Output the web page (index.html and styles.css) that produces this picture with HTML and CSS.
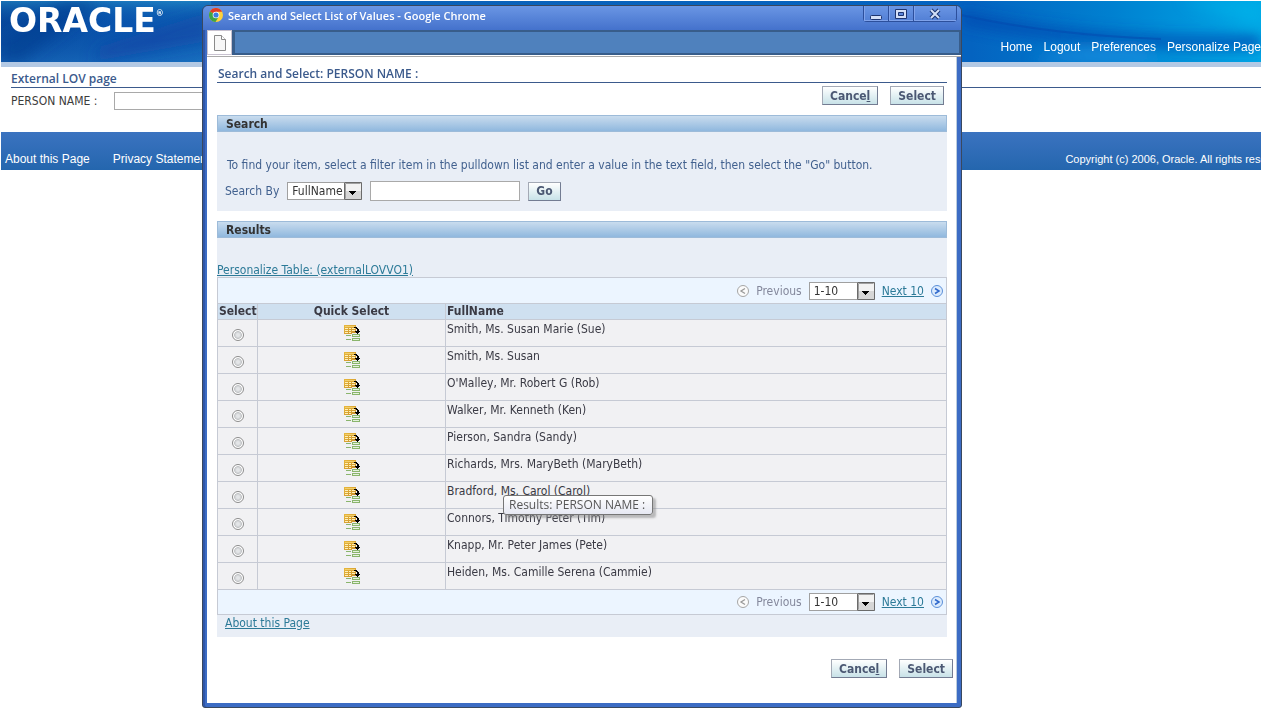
FILE: index.html
```html
<!DOCTYPE html>
<html lang="en">
<head>
<meta charset="utf-8">
<title>External LOV page</title>
<link rel="stylesheet" href="styles.css">
</head>
<body>
<svg class="defs" aria-hidden="true">
  <defs>
    <linearGradient id="gold" x2="1" y2="1"><stop offset="0" stop-color="#e9b93c"/><stop offset="1" stop-color="#c98f2a"/></linearGradient>
    <symbol id="quick" viewBox="0 0 16 16">
      <path fill="url(#gold)" d="M0 0h12v9H0z"/>
      <path fill="#f2cf6c" d="M1 1h10v1H1z"/>
      <path fill="#fff0b8" d="M1 3h3v1H1zM5 3h2v1H5zM8 3h3v1H8zM1 5h3v1H1zM5 5h2v1H5zM8 5h3v1H8zM1 7h3v1H1zM5 7h2v1H5z"/>
      <path fill="#f0f0f2" d="M8 8h5v1H8z"/>
      <path fill="#000" d="M10 2h3v1h1v1h1v2h1v1h-1v1h-1v1h-1V8h-1V7h-1V6h2V4h-1V3h-2z"/>
      <path fill="#8ab56c" d="M2 10h5v1H2zM2 14h5v1H2zM8 9h8v3H8zM8 13h8v3H8z"/>
      <path fill="#e4f2dc" d="M9 10h6v1H9zM9 14h6v1H9z"/>
    </symbol>
    <symbol id="prev" viewBox="0 0 12 12">
      <circle cx="6" cy="6" r="5.500" fill="#fbfbfb" stroke="#a5a5a5"/>
      <path fill="none" stroke="#999" stroke-width="1.300" d="M8 3.500 4 6l4 2.500"/>
    </symbol>
    <symbol id="next" viewBox="0 0 12 12">
      <circle cx="6" cy="6" r="5.500" fill="#dcebfc" stroke="#5b8fd8"/>
      <path fill="none" stroke="#2f68cc" stroke-width="1.500" d="M4 3.500 8 6 4 8.500"/>
    </symbol>
    <symbol id="drop" viewBox="0 0 18 18">
      <path fill="#f2f2f2" d="M0 0h18v9H0z"/><path fill="#d6d6d6" d="M0 9h18v9H0z"/>
      <path fill="none" stroke="#6b6b6b" d="M.5.5h17v17H.5z"/>
      <path fill="none" stroke="#a0a0a0" d="M1.500 16.500v-15h15"/>
      <path d="M5 9h7v1h-1v1h-1v1H9v1H8v-1H7v-1H6v-1H5z"/>
    </symbol>
  </defs>
</svg>

<div class="page">
  <header class="banner">
    <svg class="banner-art" viewBox="0 0 1260 61" preserveAspectRatio="none" aria-hidden="true">
      <defs>
        <linearGradient id="sky"><stop offset="0" stop-color="#07489c"/><stop offset=".1" stop-color="#0a55ae"/><stop offset=".16" stop-color="#0f62b6"/><stop offset=".77" stop-color="#0463c0"/><stop offset=".88" stop-color="#0080d0"/><stop offset="1" stop-color="#00a8e6"/></linearGradient>
        <linearGradient id="shade" x2="0" y2="1"><stop offset="0" stop-color="#2a9acc" stop-opacity=".5"/><stop offset=".35" stop-color="#0a55ae" stop-opacity="0"/><stop offset="1" stop-color="#2a86d0" stop-opacity=".35"/></linearGradient>
        <filter id="soft" x="-20%" y="-50%" width="140%" height="200%"><feGaussianBlur stdDeviation="7"/></filter>
      </defs>
      <path fill="url(#sky)" d="M0 0h1260v61H0z"/>
      <path fill="url(#shade)" d="M0 0h210v61H0z"/>
      <g filter="url(#soft)">
        <path fill="#053c90" opacity=".6" d="M0 40 60 0h40L20 61H0z"/>
        <path fill="#0d3ea0" opacity=".5" d="M100 45 210 10v30L90 61z"/>
        <path fill="#003ca8" opacity=".7" d="M960 12q130 28 300 22v14q-170 2-300-26z"/>
        <path fill="#2a93e6" opacity=".6" d="M1030 61q40-18 110-14l20 14z"/>
        <path fill="#00b4ea" opacity=".6" d="M1180 0h80v25z"/>
      </g>
      <path fill="none" stroke="#0347ae" stroke-opacity=".5" stroke-width="2" d="M960 14q90 20 200 24"/>
    </svg>
    <div class="logo">ORACLE<sup>®</sup></div>
    <nav class="banner-links">
      <a href="#">Home</a><a href="#">Logout</a><a href="#">Preferences</a><a href="#">Personalize Page</a>
    </nav>
  </header>
  <main class="form">
    <h1 class="title">External LOV page</h1>
    <div class="field">
      <label for="person">PERSON NAME :</label>
      <input id="person" class="text" type="text">
    </div>
  </main>
  <footer class="footer">
    <nav class="footer-links"><a href="#">About this Page</a><a href="#">Privacy Statement</a></nav>
    <small>Copyright (c) 2006, Oracle. All rights reserved.</small>
  </footer>
</div>

<section class="window" aria-label="Search and Select List of Values">
  <div class="titlebar">
    <svg class="chrome" viewBox="0 0 14 14" aria-hidden="true">
      <circle cx="7" cy="7" r="7" fill="#ffd23c"/>
      <path fill="#e03c28" d="M7 7 .9 3.500A7 7 0 0 1 13.100 3.700L7 3.800z"/>
      <path fill="#3fa447" d="M.9 3.500A7 7 0 0 0 6.500 14L9.500 9 7 7z"/>
      <circle cx="7" cy="7" r="3.300" fill="#fff"/><circle cx="7" cy="7" r="2.600" fill="#3b7de0"/>
    </svg>
    <span class="caption">Search and Select List of Values - Google Chrome</span>
    <div class="controls">
      <button type="button" aria-label="Minimize"><svg viewBox="0 0 14 12"><rect x="1.500" y="7.500" width="11" height="4" rx="1" fill="#d4e0f8" stroke="#1d3570"/></svg></button>
      <button type="button" aria-label="Maximize"><svg viewBox="0 0 14 12"><path fill="#d4e0f8" stroke="#1d3570" d="M1.500 1.500h11v9h-11z"/><path fill="#5b86dc" stroke="#1d3570" d="M4.500 4.500h5v3h-5z"/></svg></button>
      <button type="button" class="close" aria-label="Close"><svg viewBox="0 0 14 12"><path fill="none" stroke="#1d3570" stroke-width="4" d="m3 2 8 8M11 2l-8 8"/><path fill="none" stroke="#d4e0f8" stroke-width="2" d="m3 2 8 8M11 2l-8 8"/></svg></button>
    </div>
  </div>
  <div class="address">
    <span class="doc"><svg viewBox="0 0 12 16" aria-hidden="true"><path fill="#f7f7f7" stroke="#8a8a8a" d="M.5.5h7l4 4v11H.5z"/><path fill="#fff" stroke="#8a8a8a" d="M7.500.5v4h4"/></svg></span>
    <span class="url"></span>
  </div>
  <div class="content">
    <h2 class="title">Search and Select: PERSON NAME :</h2>
    <div class="actions top"><button type="button" class="btn">Cance<u>l</u></button><button type="button" class="btn">Select</button></div>

    <section class="panel search">
      <h3>Search</h3>
      <p>To find your item, select a filter item in the pulldown list and enter a value in the text field, then select the "Go" button.</p>
      <div class="query">
        <label for="by">Search By</label>
        <span class="pick by"><select id="by"><option>FullName</option></select><svg><use href="#drop"/></svg></span>
        <input class="text" type="text" aria-label="Search value">
        <button type="button" class="btn">Go</button>
      </div>
    </section>

    <section class="panel results">
      <h3>Results</h3>
      <a class="personalize" href="#">Personalize Table: (externalLOVVO1)</a>
      <div class="pager">
        <svg class="arrow"><use href="#prev"/></svg><span>Previous</span>
        <span class="pick range"><select aria-label="Rows shown"><option>1-10</option></select><svg><use href="#drop"/></svg></span>
        <a href="#">Next 10</a><svg class="arrow"><use href="#next"/></svg>
      </div>
      <table>
        <thead><tr><th class="c1">Select</th><th class="c2">Quick Select</th><th>FullName</th></tr></thead>
        <tbody>
          <tr><td><input type="radio" name="r" aria-label="Smith, Ms. Susan Marie (Sue)"></td><td><svg class="quick"><use href="#quick"/></svg></td><td>Smith, Ms. Susan Marie (Sue)</td></tr>
          <tr><td><input type="radio" name="r" aria-label="Smith, Ms. Susan"></td><td><svg class="quick"><use href="#quick"/></svg></td><td>Smith, Ms. Susan</td></tr>
          <tr><td><input type="radio" name="r" aria-label="O'Malley, Mr. Robert G (Rob)"></td><td><svg class="quick"><use href="#quick"/></svg></td><td>O'Malley, Mr. Robert G (Rob)</td></tr>
          <tr><td><input type="radio" name="r" aria-label="Walker, Mr. Kenneth (Ken)"></td><td><svg class="quick"><use href="#quick"/></svg></td><td>Walker, Mr. Kenneth (Ken)</td></tr>
          <tr><td><input type="radio" name="r" aria-label="Pierson, Sandra (Sandy)"></td><td><svg class="quick"><use href="#quick"/></svg></td><td>Pierson, Sandra (Sandy)</td></tr>
          <tr><td><input type="radio" name="r" aria-label="Richards, Mrs. MaryBeth (MaryBeth)"></td><td><svg class="quick"><use href="#quick"/></svg></td><td>Richards, Mrs. MaryBeth (MaryBeth)</td></tr>
          <tr><td><input type="radio" name="r" aria-label="Bradford, Ms. Carol (Carol)"></td><td><svg class="quick"><use href="#quick"/></svg></td><td class="tipped">Bradford, Ms. Carol (Carol)<span class="tip" role="tooltip">Results: PERSON NAME :</span></td></tr>
          <tr><td><input type="radio" name="r" aria-label="Connors, Timothy Peter (Tim)"></td><td><svg class="quick"><use href="#quick"/></svg></td><td>Connors, Timothy Peter (Tim)</td></tr>
          <tr><td><input type="radio" name="r" aria-label="Knapp, Mr. Peter James (Pete)"></td><td><svg class="quick"><use href="#quick"/></svg></td><td>Knapp, Mr. Peter James (Pete)</td></tr>
          <tr><td><input type="radio" name="r" aria-label="Heiden, Ms. Camille Serena (Cammie)"></td><td><svg class="quick"><use href="#quick"/></svg></td><td>Heiden, Ms. Camille Serena (Cammie)</td></tr>
        </tbody>
      </table>
      <div class="pager last">
        <svg class="arrow"><use href="#prev"/></svg><span>Previous</span>
        <span class="pick range"><select aria-label="Rows shown"><option>1-10</option></select><svg><use href="#drop"/></svg></span>
        <a href="#">Next 10</a><svg class="arrow"><use href="#next"/></svg>
      </div>
      <a class="about" href="#">About this Page</a>
    </section>
    <div class="actions bottom"><button type="button" class="btn">Cance<u>l</u></button><button type="button" class="btn">Select</button></div>
  </div>
</section>
</body>
</html>
```
FILE: styles.css
```css
* { box-sizing: border-box; }
body { margin: 0; background: #fff; font: 12px/16px "DejaVu Sans Condensed", "DejaVu Sans", sans-serif; color: #3c3c3c; overflow: hidden; }
h1, h2, h3, p { margin: 0; }
button, input, select { font: inherit; margin: 0; }
svg { display: block; }
.defs { position: absolute; width: 0; height: 0; }

.page { padding: 1px 1px 0; }
.banner { position: relative; height: 66px; border-bottom: 5px solid #b3c9e4; display: flex; justify-content: space-between; overflow: hidden; }
.banner-art { position: absolute; inset: 0; width: 100%; height: 100%; }
.logo { position: relative; padding: 4px 0 0 8px; font: bold 33px/32px "DejaVu Sans", sans-serif; color: #fff; }
.logo sup { font-size: 8px; line-height: 8px; vertical-align: 16px; }
.banner-links { position: relative; display: flex; gap: 11px; margin-top: 38px; font: 12px/16px "Liberation Sans", sans-serif; white-space: nowrap; margin-right: 0; }
.banner-links a, .footer a { color: #fff; text-decoration: none; }
.title { font: 600 12px/16px "Open Sans", "Noto Sans", sans-serif; color: #3b5a8c; border-bottom: 1px solid #3b5a8c; }
.form { padding: 3px 0 0 10px; height: 65px; }
.form .title { line-height: 17px; }
.field { display: flex; align-items: center; gap: 17px; margin-top: 4px; }
.text { height: 18px; width: 150px; border: 1px solid #a9a9a9; background: #fff; padding: 0 3px; }
.footer { height: 38px; background: linear-gradient(#3b73c0, #2466ae); color: #fff; display: flex; justify-content: space-between; padding: 19px 0 0 4px; font: 12px/16px "Liberation Sans", sans-serif; overflow: hidden; white-space: nowrap; }
.footer-links { display: flex; gap: 23px; }
.footer small { font-size: 11px; margin-right: -30px; }

.window { position: absolute; left: 202px; right: 300px; top: 5px; border: 1px solid #39485f; border-radius: 6px 6px 3px 3px; background: #3c6cc4; padding: 0 4px 4px; box-shadow: inset 2px 0 #2f56a8; }
.titlebar { height: 24px; margin: 0 -4px; padding: 0 4px 0 6px; border-radius: 5px 5px 0 0; background: linear-gradient(#6a96e4, #4472cc); display: flex; gap: 5px; color: #fff; }
.chrome { width: 14px; height: 14px; margin-top: 2px; }
.caption { flex: 1; font: 600 11px/19px "Open Sans", "Noto Sans", sans-serif; white-space: nowrap; }
.controls { display: flex; height: 16px; border: 1px solid #2c4f9c; border-top: 0; border-radius: 0 0 4px 4px; }
.controls button { width: 25px; padding: 0 5px; border: 0; border-right: 1px solid #2c4f9c; background: none; box-shadow: inset 1px -1px #7fa2ea; }
.controls .close { width: 42px; padding: 0 14px; border: 0; }
.controls svg { width: 14px; height: 12px; }
.address { display: flex; height: 27px; background: #fff; border-bottom: 1px solid #aaa; margin-right: -4px; }
.doc { width: 25px; padding: 4px 6px; border: 1px solid #c8c2d0; height: 25px; }
.doc svg { width: 12px; height: 16px; }
.url { flex: 1; height: 25px; border: 2px solid #385d8a; border-left-width: 3px; background: #4f81bd; }
.content { background: #fff; padding: 9px 9px 25px 10px; border-right: 1px solid #bcd; color: #42618f; }
.content .title { padding-left: 1px; }
.actions { display: flex; justify-content: flex-end; gap: 12px; }
.actions.top { padding: 3px 3px 10px 0; }
.actions.bottom { margin: 22px -6px 0 0; }
.btn { height: 19px; padding: 0 7px; border: 1px solid; border-color: #a3a9b5 #737c92 #737c92 #a3a9b5; background: linear-gradient(#fff, #c8e2e8); color: #4b5873; font-weight: bold; line-height: 16px; }
.panel { background: #e9eef6; }
.panel h3 { height: 17px; border: 1px solid #9dbbd9; background: linear-gradient(#c9dcee, #90b8de); padding-left: 8px; font-size: 12px; line-height: 17px; color: #333; }
.panel p { padding: 25px 10px 0; }
.search { height: 96px; margin-bottom: 10px; }
.query { display: flex; align-items: center; gap: 8px; padding: 8px 8px 0; }
.query .text { height: 20px; }
.pick { position: relative; display: block; }
.pick select { appearance: none; display: block; width: 100%; height: 18px; border: 1px solid #a0a0a0; border-radius: 0; background: #fff; color: #333; padding: 0 4px; line-height: 16px; }
.pick svg { position: absolute; right: 0; top: 0; width: 18px; height: 18px; pointer-events: none; }
.by { width: 75px; }
.range { width: 66px; }
a { color: #2c7a98; }
.personalize { display: block; width: max-content; padding-top: 25px; line-height: 14px; }
.pager { display: flex; align-items: center; justify-content: flex-end; gap: 7px; height: 26px; padding-right: 3px; border: 1px solid #c6cad4; border-bottom: 0; background: #ecf5ff; color: #84889c; }
.pager.last { height: 25px; border-top: 0; border-bottom: 1px solid #c6cad4; }
.arrow { width: 12px; height: 12px; }
table { width: 100%; border-collapse: collapse; table-layout: fixed; color: #3a3a44; }
th, td { border: 1px solid #c6cad4; padding: 0 1px; }
th { height: 16px; line-height: 15px; background: #cfe0f0; }
td { height: 27px; background: #f1f1f3; text-align: center; vertical-align: middle; }
td:last-child { text-align: left; vertical-align: top; line-height: 18px; }
th:last-child { text-align: left; }
.c1 { width: 40px; }
.c2 { width: 188px; }
.quick { width: 16px; height: 16px; margin: 0 auto; }
td input { appearance: none; display: block; width: 12px; height: 12px; margin: 4px auto 0; border: 1px solid #8c8c8c; border-radius: 50%; background: radial-gradient(#e4e6e8 20%, #c4c6c8 50%, #fff 60%); }
.tipped { position: relative; }
.tip { position: absolute; z-index: 1; left: 57px; top: 13px; height: 20px; padding: 0 7px 0 5px; border: 1px solid #767676; border-radius: 3px; background: linear-gradient(#fff, #e6e8f2); box-shadow: 3px 3px 2px #8888; color: #575757; line-height: 18px; white-space: nowrap; font-family: "Open Sans", "Noto Sans", sans-serif; }
.about { display: block; width: max-content; padding: 0 0 6px 8px; }
```
